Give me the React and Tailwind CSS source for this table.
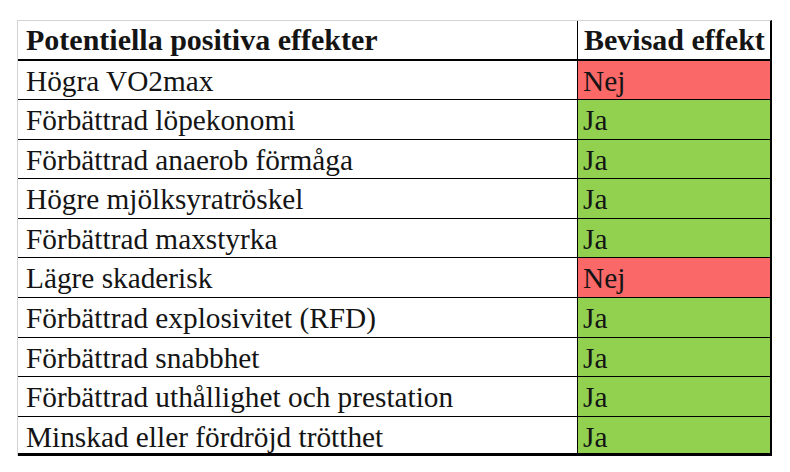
import React from "react";

const rows = [
  ["Högra VO2max", false],
  ["Förbättrad löpekonomi", true],
  ["Förbättrad anaerob förmåga", true],
  ["Högre mjölksyratröskel", true],
  ["Förbättrad maxstyrka", true],
  ["Lägre skaderisk", false],
  ["Förbättrad explosivitet (RFD)", true],
  ["Förbättrad snabbhet", true],
  ["Förbättrad uthållighet och prestation", true],
  ["Minskad eller fördröjd trötthet", true],
];

function App() {
  return (
    <div
      className="w-[790px] h-[472px] bg-white pt-[20px] pl-[17px]"
      style={{ fontFamily: '"Liberation Serif", "Times New Roman", serif' }}
    >
      <div className="w-[755px] border-l border-t border-[#d4d4d4] border-r-2 border-r-black text-[#141414]">
        <div className="flex h-[39.5px] border-b-2 border-black">
          <div className="w-[559px] pl-2 pt-[4px] text-[30px] font-bold leading-[30px]">
            Potentiella positiva effekter
          </div>
          <div className="flex-1 border-l border-black pl-[6px] pt-[4px] text-[30px] font-bold leading-[30px]">
            Bevisad effekt
          </div>
        </div>
        {rows.map(([label, yes], i) => (
          <div
            key={i}
            className={
              i === rows.length - 1
                ? "flex h-[39.6px] border-b-[3px] border-black"
                : "flex h-[39.6px] border-b border-black"
            }
          >
            <div className="w-[559px] pl-2 pt-[6px] text-[29.3px] leading-[29px] whitespace-nowrap">
              {label}
            </div>
            <div
              className={
                yes
                  ? "flex-1 border-l border-black bg-[#92d050] pl-[5px] pt-[6px] text-[29.3px] leading-[29px]"
                  : "flex-1 border-l border-black bg-[#fa6868] pl-[5px] pt-[6px] text-[29.3px] leading-[29px]"
              }
            >
              {yes ? "Ja" : "Nej"}
            </div>
          </div>
        ))}
      </div>
    </div>
  );
}

export default App;
